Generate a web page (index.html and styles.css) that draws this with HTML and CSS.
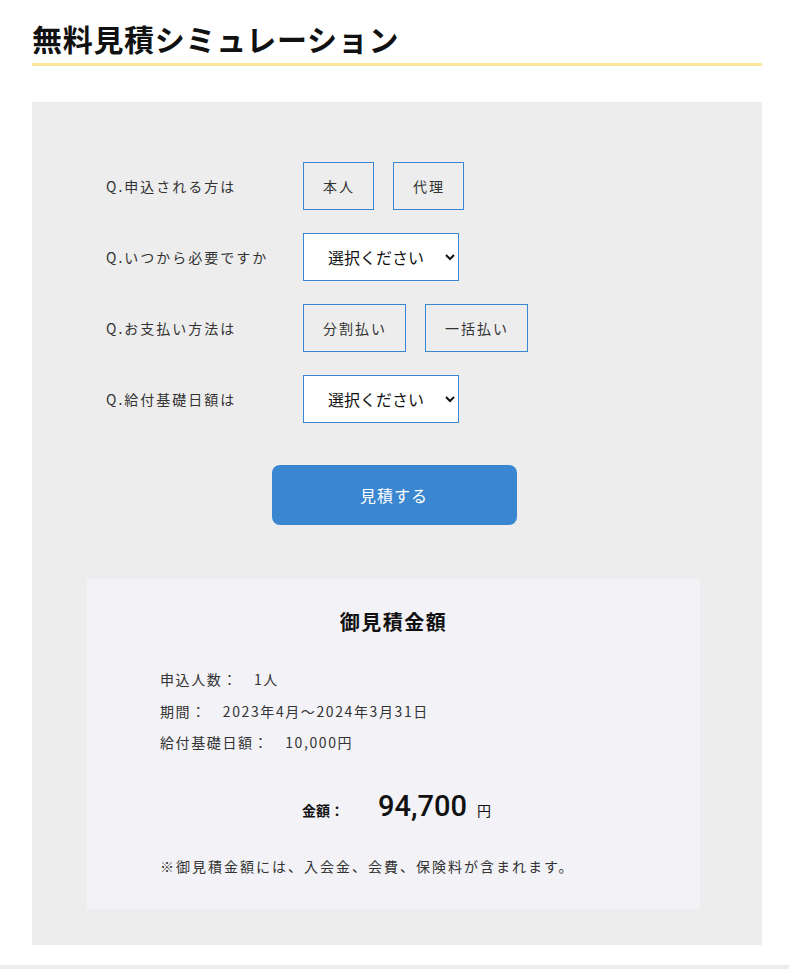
FILE: index.html
```html
<!DOCTYPE html>
<html lang="ja">
<head>
<meta charset="UTF-8">
<meta name="viewport" content="width=device-width, initial-scale=1.0">
<title>無料見積シミュレーション</title>
<link rel="stylesheet" href="styles.css">
</head>
<body>
    <div class="wrapper">
        <h1 class="page-title">無料見積シミュレーション</h1>

        <div class="sim-box">
            <div class="sim-row">
                <div class="sim-label">Q.申込される方は</div>
                <div class="sim-options">
                    <button class="opt-btn">本人</button>
                    <button class="opt-btn">代理</button>
                </div>
            </div>
            <div class="sim-row">
                <div class="sim-label">Q.いつから必要ですか</div>
                <div class="sim-options">
                    <select class="sim-select">
                        <option>選択ください</option>
                    </select>
                </div>
            </div>
            <div class="sim-row">
                <div class="sim-label">Q.お支払い方法は</div>
                <div class="sim-options">
                    <button class="opt-btn">分割払い</button>
                    <button class="opt-btn">一括払い</button>
                </div>
            </div>
            <div class="sim-row">
                <div class="sim-label">Q.給付基礎日額は</div>
                <div class="sim-options">
                    <select class="sim-select">
                        <option>選択ください</option>
                    </select>
                </div>
            </div>

            <div class="submit-wrap">
                <button class="submit-btn">見積する</button>
            </div>

            <div class="result">
                <h2 class="result-title">御見積金額</h2>
                <ul class="result-list">
                    <li><span class="result-key">申込人数：</span>1人</li>
                    <li><span class="result-key">期間：</span>2023年4月～2024年3月31日</li>
                    <li><span class="result-key">給付基礎日額：</span>10,000円</li>
                </ul>
                <div class="total">
                    <span class="total-label">金額：</span>
                    <span class="total-num">94,700</span>
                    <span class="total-unit">円</span>
                </div>
                <p class="note">※御見積金額には、入会金、会費、保険料が含まれます。</p>
            </div>
        </div>
    </div>
    <div class="footer-line"></div>
</body>
</html>
```

FILE: styles.css
```css
/* Basic styling */
body {
    font-family: "Noto Sans CJK JP", "Noto Sans", sans-serif;
    color: #333;
    background-color: #fff;
    margin: 0;
    padding: 0;
}
.wrapper {
    width: 730px;
    margin: 0 0 0 32px;
    padding-top: 18px;
}
.page-title {
    font-size: 30px;
    font-weight: bold;
    color: #111;
    letter-spacing: 0.7px;
    margin: 0 0 36px;
    padding-bottom: 5px;
    line-height: 40px;
    border-bottom: 3px solid #fbe69c;
}
.sim-box {
    background-color: #ededed;
    padding: 60px 0 36px;
}
.sim-row {
    display: flex;
    align-items: center;
    padding-left: 74px;
    margin-bottom: 23px;
}
.sim-label {
    width: 197px;
    font-size: 14px;
    letter-spacing: 2px;
}
.sim-options {
    display: flex;
    gap: 19px;
}
.opt-btn {
    font-family: inherit;
    font-size: 14px;
    color: #333;
    background: transparent;
    border: 1px solid #3a86d0;
    height: 48px;
    padding: 0 18px 0 19px;
    letter-spacing: 2px;
    cursor: pointer;
}
.sim-select {
    font-family: inherit;
    font-size: 16px;
    color: #111;
    background: #fff;
    border: 1px solid #3a86d0;
    border-radius: 0;
    width: 156px;
    height: 48px;
    padding: 0 0 0 20px;
}
.submit-wrap {
    display: flex;
    justify-content: center;
    padding-right: 6px;
    margin-top: 42px;
}
.submit-btn {
    font-family: inherit;
    font-size: 16px;
    color: #fff;
    letter-spacing: 1px;
    background-color: #3a86d0;
    border: none;
    border-radius: 8px;
    width: 245px;
    height: 60px;
    cursor: pointer;
}
.result {
    background-color: #f2f2f7;
    width: 613px;
    margin: 54px 0 0 55px;
    padding: 28px 0 33px;
}
.result-title {
    text-align: center;
    font-size: 20px;
    font-weight: bold;
    color: #111;
    letter-spacing: 1.5px;
    margin: 0 0 27px;
    line-height: 30px;
}
.result-list {
    list-style: none;
    margin: 0;
    padding: 0 0 0 73px;
    font-size: 14px;
    letter-spacing: 1.6px;
}
.result-list li {
    line-height: 31.5px;
}
.result-key {
    margin-right: 16px;
}
.total {
    display: flex;
    justify-content: center;
    align-items: baseline;
    padding-left: 6px;
    margin: 30px 0 0;
}
.total-label {
    font-size: 14px;
    font-weight: bold;
    color: #111;
    margin-right: 34px;
}
.total-num {
    font-family: Roboto, "Noto Sans", sans-serif;
    font-size: 29px;
    font-weight: 500;
    color: #111;
    margin-right: 10px;
}
.total-unit {
    font-size: 14px;
    color: #111;
}
.note {
    font-size: 14px;
    margin: 33px 0 0 73px;
    letter-spacing: 2px;
}
.footer-line {
    margin-top: 20px;
    height: 4px;
    background-color: #ececec;
}
```
